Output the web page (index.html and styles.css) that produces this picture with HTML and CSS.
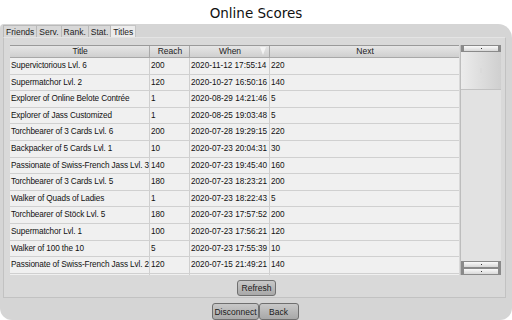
FILE: index.html
```html
<!DOCTYPE html>
<html lang="en">
<head>
    <meta charset="UTF-8">
    <title>Online Scores</title>
    <link rel="stylesheet" href="styles.css">
</head>
<body>
    <h1 class="title">Online Scores</h1>

    <div class="panel">
        <div class="tabs">
            <span class="tab">Friends</span>
            <span class="tab">Serv.</span>
            <span class="tab">Rank.</span>
            <span class="tab">Stat.</span>
            <span class="tab active">Titles</span>
        </div>

        <div class="pane">
            <div class="grid-wrap">
                <div class="grid">
                    <div class="row head">
                        <div class="c title-col">Title</div>
                        <div class="c reach">Reach</div>
                        <div class="c when">When<span class="sort"></span></div>
                        <div class="c next">Next</div>
                    </div>
                    <div class="row"><div class="c title-col">Supervictorious Lvl. 6</div><div class="c reach">200</div><div class="c when">2020-11-12 17:55:14</div><div class="c next">220</div></div>
                    <div class="row"><div class="c title-col">Supermatchor Lvl. 2</div><div class="c reach">120</div><div class="c when">2020-10-27 16:50:16</div><div class="c next">140</div></div>
                    <div class="row"><div class="c title-col">Explorer of Online Belote Contrée</div><div class="c reach">1</div><div class="c when">2020-08-29 14:21:46</div><div class="c next">5</div></div>
                    <div class="row"><div class="c title-col">Explorer of Jass Customized</div><div class="c reach">1</div><div class="c when">2020-08-25 19:03:48</div><div class="c next">5</div></div>
                    <div class="row"><div class="c title-col">Torchbearer of 3 Cards Lvl. 6</div><div class="c reach">200</div><div class="c when">2020-07-28 19:29:15</div><div class="c next">220</div></div>
                    <div class="row"><div class="c title-col">Backpacker of 5 Cards Lvl. 1</div><div class="c reach">10</div><div class="c when">2020-07-23 20:04:31</div><div class="c next">30</div></div>
                    <div class="row"><div class="c title-col">Passionate of Swiss-French Jass Lvl. 3</div><div class="c reach">140</div><div class="c when">2020-07-23 19:45:40</div><div class="c next">160</div></div>
                    <div class="row"><div class="c title-col">Torchbearer of 3 Cards Lvl. 5</div><div class="c reach">180</div><div class="c when">2020-07-23 18:23:21</div><div class="c next">200</div></div>
                    <div class="row"><div class="c title-col">Walker of Quads of Ladies</div><div class="c reach">1</div><div class="c when">2020-07-23 18:22:43</div><div class="c next">5</div></div>
                    <div class="row"><div class="c title-col">Torchbearer of Stöck Lvl. 5</div><div class="c reach">180</div><div class="c when">2020-07-23 17:57:52</div><div class="c next">200</div></div>
                    <div class="row"><div class="c title-col">Supermatchor Lvl. 1</div><div class="c reach">100</div><div class="c when">2020-07-23 17:56:21</div><div class="c next">120</div></div>
                    <div class="row"><div class="c title-col">Walker of 100 the 10</div><div class="c reach">5</div><div class="c when">2020-07-23 17:55:39</div><div class="c next">10</div></div>
                    <div class="row"><div class="c title-col">Passionate of Swiss-French Jass Lvl. 2</div><div class="c reach">120</div><div class="c when">2020-07-15 21:49:21</div><div class="c next">140</div></div>
                    <div class="row"><div class="c title-col">&nbsp;</div><div class="c reach"></div><div class="c when"></div><div class="c next"></div></div>
                </div>
                <div class="scrollbar">
                    <div class="sb-btn"><span class="dot"></span></div>
                    <div class="sb-thumb"><span class="grip"></span></div>
                    <div class="sb-track"></div>
                    <div class="sb-btn"><span class="dot"></span></div>
                    <div class="sb-btn"><span class="dot"></span></div>
                </div>
            </div>
            <div class="actions">
                <button class="btn">Refresh</button>
            </div>
        </div>

        <div class="footer">
            <button class="btn">Disconnect</button>
            <button class="btn">Back</button>
        </div>
    </div>
</body>
</html>
```

FILE: styles.css
```css
body {
    margin: 0;
    width: 512px;
    height: 320px;
    overflow: hidden;
    background: #fff;
    font-family: "Liberation Sans", Arial, sans-serif;
    color: #111;
}
.title {
    margin: 0;
    height: 24px;
    line-height: 26px;
    text-align: center;
    font-family: "DejaVu Sans", sans-serif;
    font-weight: normal;
    font-size: 13.5px;
    color: #111;
}
.panel {
    height: 296px;
    background: #d5d5d5;
    border-radius: 4px 14px 12px 12px;
    display: flex;
    flex-direction: column;
    box-sizing: border-box;
    padding: 1px 6px 0 3px;
}
.tabs {
    display: flex;
    height: 12px;
}
.tab {
    font-size: 8.5px;
    line-height: 12px;
    padding: 0 2px;
    border: 1px solid #b9b9b9;
    border-bottom: none;
    background: #d8d8d8;
    color: #222;
}
.tab + .tab {
    border-left: none;
}
.tab.active {
    background: #ececec;
    border-color: #c4c4c4;
}
.pane {
    height: 261px;
    border: 1px solid #c2c2c2;
    border-top: 1px solid #e4e4e4;
    box-sizing: border-box;
    background: #d9d9d9;
    padding: 7px 4px 0 6px;
    display: flex;
    flex-direction: column;
}
.grid-wrap {
    display: flex;
    height: 230px;
}
.grid {
    width: 450px;
    overflow: hidden;
    background: #f0f0f0;
    border-top: 1px solid #9a9a9a;
}
.row {
    display: flex;
    height: 16.6px;
    border-bottom: 1px solid #d0d0d0;
    box-sizing: border-box;
    font-size: 8.2px;
    line-height: 15.6px;
}
.row.head {
    height: 12px;
    line-height: 11px;
    font-size: 8.5px;
    background: linear-gradient(#e6e6e6, #cfcfcf);
    border-bottom: 1px solid #a8a8a8;
}
.c {
    box-sizing: border-box;
    padding-left: 1px;
    white-space: nowrap;
    overflow: hidden;
    border-right: 1px solid #cfcfcf;
}
.head .c {
    text-align: center;
    border-right-color: #a9a9a9;
    color: #222;
}
.title-col {
    width: 140px;
    letter-spacing: -0.12px;
}
.reach { width: 40px; }
.when { width: 80px; position: relative; }
.next { flex: 1; border-right: none; }
.sort {
    position: absolute;
    right: 3px;
    top: 1px;
    width: 0;
    height: 0;
    border-left: 3px solid transparent;
    border-right: 3px solid transparent;
    border-top: 8px solid #f4f4f4;
}
.scrollbar {
    width: 40px;
    margin-left: 1px;
    display: flex;
    flex-direction: column;
    background: #e2e2e2;
    border-left: 1px solid #bdbdbd;
}
.sb-btn {
    height: 5px;
    background: linear-gradient(#fafafa, #d8d8d8);
    border: 1px solid #8a8a8a;
    border-left-width: 3px;
    border-right-width: 3px;
    display: flex;
    align-items: center;
    justify-content: center;
}
.dot {
    width: 1px;
    height: 1px;
    background: #333;
}
.sb-thumb {
    height: 37px;
    background: linear-gradient(90deg, #ececec, #cfcfcf);
    border-bottom: 1px solid #c2c2c2;
    display: flex;
    align-items: center;
    justify-content: center;
}
.grip {
    width: 2px;
    height: 5px;
    background: #dadada;
}
.sb-track {
    flex: 1;
}
.actions {
    display: flex;
    justify-content: center;
    padding-top: 5px;
    padding-left: 2px;
}
.btn {
    font-family: "Liberation Sans", Arial, sans-serif;
    font-size: 8.5px;
    height: 16px;
    padding: 0 4px;
    border: 1px solid #6f6f6f;
    border-radius: 3px;
    background: linear-gradient(#c8c8c8, #a8a8a8);
    color: #1a1a1a;
    cursor: pointer;
}
.footer {
    display: flex;
    justify-content: center;
    padding-top: 5px;
    padding-left: 2px;
}
.footer .btn {
    height: 17px;
    min-width: 40px;
    padding: 0 1px;
}
```
